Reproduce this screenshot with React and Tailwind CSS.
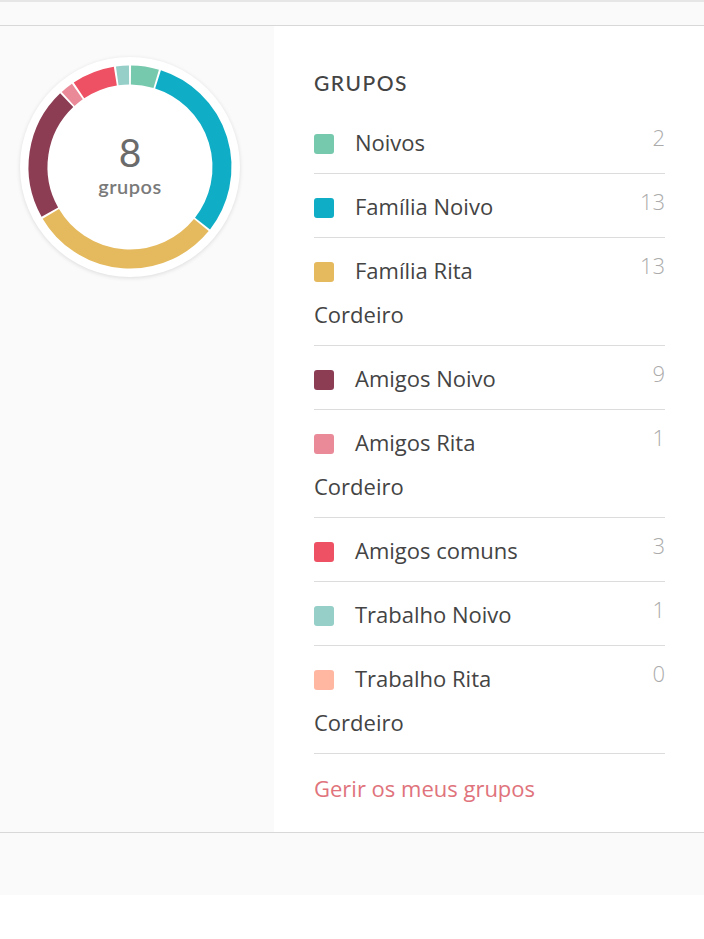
import React from "react";

const groups = [
  { name: "Noivos", count: 2, color: "#76c9ad" },
  { name: "Família Noivo", count: 13, color: "#10aec6" },
  { name: "Família Rita Cordeiro", count: 13, color: "#e5ba5e" },
  { name: "Amigos Noivo", count: 9, color: "#8c3d54" },
  { name: "Amigos Rita Cordeiro", count: 1, color: "#ea8a98" },
  { name: "Amigos comuns", count: 3, color: "#ee5163" },
  { name: "Trabalho Noivo", count: 1, color: "#95cfc8" },
  { name: "Trabalho Rita Cordeiro", count: 0, color: "#ffb7a2" },
];

const polar = (cx, cy, r, deg) => {
  const a = ((deg - 90) * Math.PI) / 180;
  return [cx + r * Math.cos(a), cy + r * Math.sin(a)];
};

const arc = (cx, cy, r, start, end) => {
  const [x1, y1] = polar(cx, cy, r, start);
  const [x2, y2] = polar(cx, cy, r, end);
  const large = end - start > 180 ? 1 : 0;
  return `M ${x1} ${y1} A ${r} ${r} 0 ${large} 1 ${x2} ${y2}`;
};

const Donut = () => {
  const total = groups.reduce((s, g) => s + g.count, 0);
  let angle = 0;
  const segs = [];
  groups.forEach((g) => {
    if (!g.count) return;
    const sweep = (g.count / total) * 360;
    segs.push({ color: g.color, start: angle + 0.6, end: angle + sweep - 0.6 });
    angle += sweep;
  });

  return (
    <div className="relative w-[220px] h-[220px] rounded-full bg-white shadow-[0_1px_4px_rgba(0,0,0,0.12)]">
      <svg width="220" height="220" viewBox="0 0 220 220" className="absolute inset-0">
        {segs.map((s, i) => (
          <path key={i} d={arc(110, 110, 92, s.start, s.end)} stroke={s.color} strokeWidth="19" fill="none" />
        ))}
      </svg>
      <div className="absolute inset-0 flex flex-col items-center justify-center pb-[2px] text-[#6b6b6b]" style={{ fontFamily: "Lato, sans-serif" }}>
        <span className="text-[39px] leading-[40px]">8</span>
        <span className="text-[20px] leading-[28px] font-semibold tracking-[0.5px] text-[#7a7a7a]">grupos</span>
      </div>
    </div>
  );
};

const Row = ({ g }) => (
  <div className="border-b border-[#dcdcdc] pt-[10px] pb-[9px] text-[22px] leading-[44px] text-[#444]">
    <span className="float-right w-[125px] text-right text-[#ababab] leading-[34px] font-light">{g.count}</span>
    <span className="inline-block w-[20px] h-[20px] rounded-[3px] mr-[21px] align-[-3px]" style={{ backgroundColor: g.color }} />
    {g.name}
  </div>
);

export default function App() {
  return (
    <div className="w-[704px] h-[939px] bg-white" style={{ fontFamily: "'Open Sans', sans-serif" }}>
      <div className="h-[26px] bg-[#fafafa] border-t-2 border-[#e6e6e6] border-b border-b-[#d8d8d8]" />
      <div className="flex border-b border-[#d8d8d8]">
        <div className="w-[274px] bg-[#fafafa] pt-[31px] pl-[20px]">
          <Donut />
        </div>
        <div className="flex-1 pl-[40px] pr-[39px] pt-[43px] pb-[22px]">
          <h2 className="text-[21px] leading-[28px] font-medium tracking-[1.5px] text-[#444] mb-[13px]" style={{ fontFamily: "Lato, sans-serif" }}>
            GRUPOS
          </h2>
          {groups.map((g) => (
            <Row key={g.name} g={g} />
          ))}
          <div className="text-[22px] leading-[44px] text-[#e0737c] pt-[12px]">Gerir os meus grupos</div>
        </div>
      </div>
      <div className="h-[62px] bg-[#fafafa]" />
    </div>
  );
}
